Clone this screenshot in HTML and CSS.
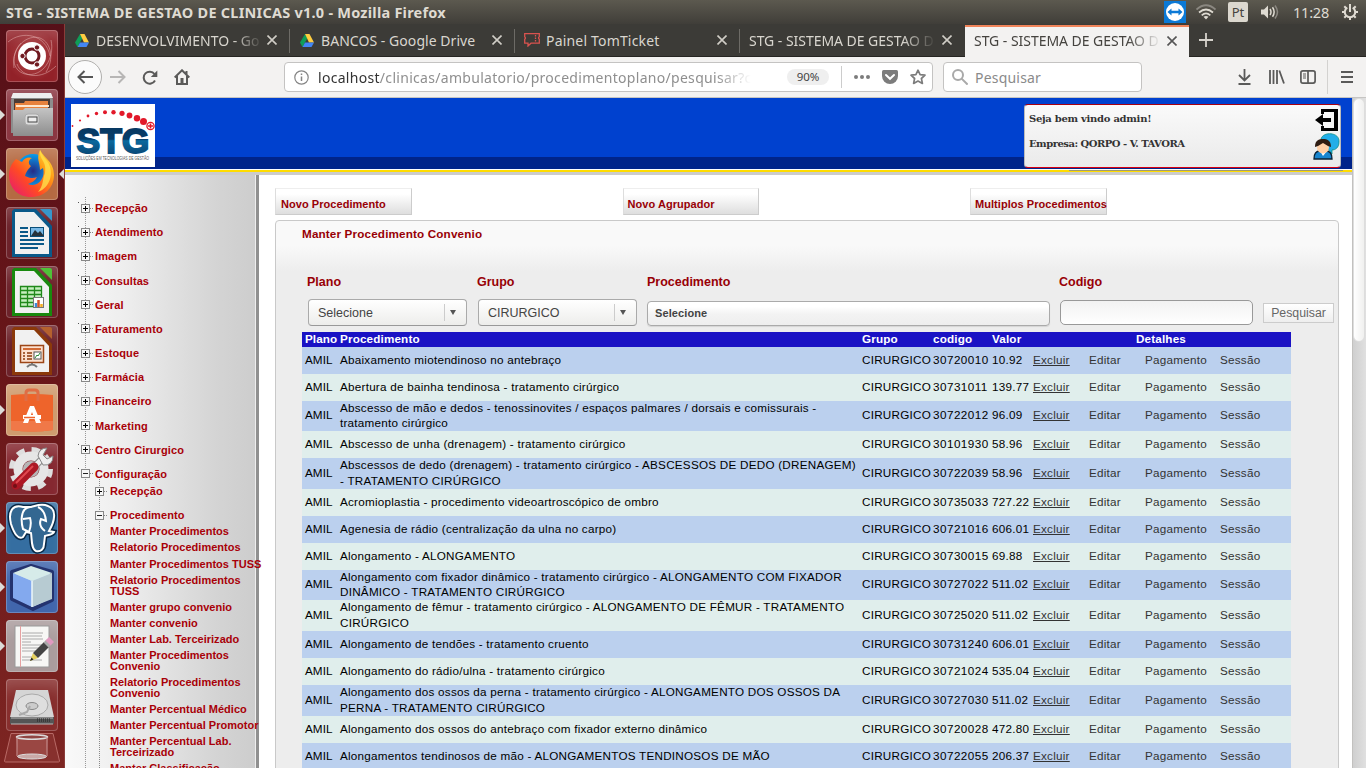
FILE: index.html
```html
<!DOCTYPE html>
<html lang="pt-BR">
<head>
<meta charset="utf-8">
<title>STG - SISTEMA DE GESTAO DE CLINICAS v1.0</title>
<link rel="stylesheet" href="styles.css">
</head>
<body>
<header class="topbar">
  <span class="topbar-title">STG - SISTEMA DE GESTAO DE CLINICAS v1.0 - Mozilla Firefox</span>
  <div class="indicators">
    <svg class="ind-tv" width="22" height="22" viewBox="0 0 22 22"><rect width="22" height="22" fill="#0b79d6"/><circle cx="11" cy="11" r="9" fill="#fff"/><path d="M3.5 11l4-3.6v2.4h7V7.4l4 3.6-4 3.6v-2.4h-7v2.4z" fill="#0b79d6"/></svg>
    <svg class="ind-wifi" width="20" height="16" viewBox="0 0 20 16" fill="none" stroke-width="1.700"><path d="M.5 5.500Q10-3 19.500 5.500" stroke="#8b8881"/><path d="M3 8.500Q10 2.500 17 8.500" stroke="#dfdbd2"/><path d="M5.700 11.400Q10 7.500 14.300 11.400" stroke="#dfdbd2"/><path d="M7.500 12.800q2.500-1.500 5 0L10 15.500z" fill="#dfdbd2"/></svg>
    <span class="ind-lang">Pt</span>
    <svg class="ind-vol" width="20" height="16" viewBox="0 0 20 16" fill="none" stroke="#dfdbd2" stroke-width="1.500"><path d="M0 5.500h3l4-4v13l-4-4H0z" fill="#dfdbd2" stroke="none"/><path d="M9 5q2 3 0 6M11.500 3.300q3.300 4.700 0 9.400"/><path d="M14 1.500q5 6.500 0 13" stroke="#8b8881"/></svg>
    <span class="clock">11:28</span>
    <svg class="ind-gear" width="16" height="16" viewBox="0 0 16 16" fill="none" stroke="#dfdbd2"><path d="M5.300 3.600a5.200 5.200 0 1 0 5.400 0" stroke-width="2"/><path d="M8 0v8" stroke-width="2"/><path d="M0 8h2.500M13.500 8H16M8 13.500V16M2.300 2.300l1.900 1.900M13.700 2.300l-1.900 1.900M2.300 13.700l1.900-1.900M13.700 13.700l-1.900-1.900" stroke-width="2"/></svg>
  </div>
</header>
<div class="desktop">
<nav class="launcher">
  <div class="app app-dash"><svg width="52" height="52" viewBox="0 0 52 52"><g fill="none" stroke="#e7b5b5" opacity=".5"><path d="M8 38C5 16 22 4 34 8c12 5 14 22 6 34M45 10c4 18-8 38-26 34C5 40 5 24 15 13M2 12c14-12 38-8 42 14M50 36C36 50 16 48 11 34"/></g><circle cx="26" cy="26" r="14" fill="#fff"/><circle cx="26" cy="26" r="7" fill="none" stroke="#701920" stroke-width="3"/><g fill="#701920" stroke="#fff" stroke-width="1"><circle cx="16.500" cy="26" r="2.700"/><circle cx="31" cy="17.500" r="2.700"/><circle cx="31" cy="34.500" r="2.700"/></g></svg></div>
  <div class="app app-files running"><svg width="52" height="52" viewBox="0 0 52 52"><defs><linearGradient id="cab" x2="0" y2="1"><stop stop-color="#c4c4c4"/><stop offset="1" stop-color="#8d8d8d"/></linearGradient></defs><path d="M7 4h38l2 7v33H5V11z" fill="#8d8d8d"/><path d="M7 4h38l2 5H5z" fill="#eee"/><rect x="8" y="10" width="36" height="12" fill="#4b3b35"/><path d="M9 14h9l1-2h23v11H9z" fill="#e7823d"/><path d="M10 17h33" stroke="#ffe7ce" stroke-width="2"/><path d="M7 21h10l2-2h28v28H7z" fill="url(#cab)"/><rect x="19" y="25" width="14" height="11" rx="3" fill="#ddd" stroke="#aaa"/><rect x="22" y="28" width="9" height="5" fill="#eee" stroke="#444"/></svg></div>
  <div class="app app-firefox running focused"><svg width="52" height="52" viewBox="0 0 52 52"><defs><linearGradient id="fox" x1="0" y1="1" x2="1" y2="0"><stop stop-color="#e3147b"/><stop offset=".38" stop-color="#ff4a24"/><stop offset=".68" stop-color="#ff9b15"/><stop offset="1" stop-color="#fff34b"/></linearGradient><radialGradient id="globe"><stop stop-color="#252c86"/><stop offset="1" stop-color="#079ded"/></radialGradient></defs><circle cx="27" cy="23" r="17" fill="url(#globe)"/><path d="M10 11l6 3c3-5 7-5 10-4-4 2-4 6-1 8-4 5-5 6-6 10 4 2 8 3 12 1-2 4-6 6-9 7 10 4 18-6 15-16l-3 2c0-8-4-11 0-20 5 9 14 12 14 25 0 13-10 22-23 22S3 40 3 27c0-7 3-12 7-16z" fill="url(#fox)"/><path d="M34 2c-1 11 7 10 5 23-3 7-1 12-7 19 12-4 17-20 9-31-3-4-5-6-7-11z" fill="#ffe04b" opacity=".8"/></svg></div>
  <div class="app app-office"><svg width="52" height="52" viewBox="0 0 52 52"><path d="M8 2h22l16 17v31H6V4z" fill="#0a5989"/><path d="M34 2h10q2 0 2 2v10z" fill="#3797ca"/><path d="M9 5h19l15 16v26H9z" fill="#f1f1f1"/><path d="M14 21h8M14 25h8M14 29h8M14 33h24M14 37h24M14 41h18" stroke="#0a5989" stroke-width="2"/><rect x="24.500" y="20.500" width="13" height="9" fill="#78b8e5" stroke="#0a4e79"/><path d="M25 29l4-6 3 3 2-2 4 5z" fill="#27323a"/></svg></div>
  <div class="app app-office"><svg width="52" height="52" viewBox="0 0 52 52"><path d="M8 2h22l16 17v31H6V4z" fill="#19890e"/><path d="M34 2h10q2 0 2 2v10z" fill="#4fc238"/><path d="M9 5h19l15 16v26H9z" fill="#f1f1f1"/><path d="M14.500 20.500h21v20h-21zM14 24.500h22M14 28.500h22M14 32.500h22M14 36.500h22M21.500 20v21M28.500 20v21" fill="#c6efbf" stroke="#20891a" stroke-width="1.300"/><rect x="27.500" y="31.500" width="10" height="10" fill="#fff" stroke="#777"/><path d="M30 41v-4" stroke="#3e8ad8" stroke-width="2.500"/><path d="M32.500 41v-7" stroke="#d65224" stroke-width="2.500"/><path d="M35.500 41v-3" stroke="#f4ad20" stroke-width="2.500"/></svg></div>
  <div class="app app-office"><svg width="52" height="52" viewBox="0 0 52 52"><path d="M8 2h22l16 17v31H6V4z" fill="#8b390a"/><path d="M34 2h10q2 0 2 2v10z" fill="#b5612e"/><path d="M9 5h19l15 16v26H9z" fill="#f1f1f1"/><rect x="14.500" y="20.500" width="23" height="17" fill="#fce0ce" stroke="#9d4617" stroke-width="1.500"/><path d="M17 24h18" stroke="#d26b35" stroke-width="2"/><path d="M17 28h2M21 28h5M17 31h2M21 31h5M17 34h2M21 34h5" stroke="#8b390a" stroke-width="1.500"/><rect x="28" y="27" width="7" height="7" fill="#fff" stroke="#555"/><path d="M29 33l2-3 1 1 2-3" fill="none" stroke="#2b8c35"/><path d="M26 38v2M21 42q5-5 10 0" fill="none" stroke="#777" stroke-width="2"/></svg></div>
  <div class="app app-software running"><svg width="52" height="52" viewBox="0 0 52 52"><path d="M5 11q21-2 42 0v35q-21 3-42 0z" fill="#ee642b"/><path d="M5 37h42v9q-21 3-42 0z" fill="#f07848"/><path d="M20 17V9q0-3 3-3h6q3 0 3 3v8" fill="none" stroke="#df6d45" stroke-width="3"/><path d="M17 39l7-17h4l7 17h-5l-4-11-4 11z" fill="#fff"/><path d="M17 33h18" stroke="#fff" stroke-width="4"/><path d="M18 33.500h11" stroke="#ee642b" stroke-width="1.500"/></svg></div>
  <div class="app app-settings"><svg width="52" height="52" viewBox="0 0 52 52"><circle cx="25" cy="26" r="19" fill="none" stroke="#dedede" stroke-width="6" stroke-dasharray="8 6.920"/><circle cx="25" cy="26" r="13" fill="none" stroke="#e6e6e6" stroke-width="9"/><circle cx="25" cy="26" r="8" fill="#b6b6b6"/><path d="M29 23L39 13" stroke="#888" stroke-width="7"/><path d="M29 23L39 13" stroke="#eee" stroke-width="5"/><path d="M32 13q1-8 9-8l-4 7 4 4 6-3q0 10-10 9z" fill="#eee" stroke="#888"/><path d="M10 42L28 24" stroke="#ad1724" stroke-width="9" stroke-linecap="round"/><path d="M10 40L27 23" stroke="#e14850" stroke-width="2"/><circle cx="9" cy="43" r="2" fill="#731017"/></svg></div>
  <div class="app app-postgres running"><svg width="52" height="52" viewBox="0 0 52 52"><g stroke="#082745" stroke-width="5"><path d="M17 5C6 2 2 10 5 22c3 9 7 16 12 13l3-5 5 1c1 6 0 16 5 18 5 1 8-2 8-7l1-8c3-1 8-1 9-4l-5-1c6-10 8-22-1-25-7-3-12 0-17 1z"/></g><path d="M17 5C6 2 2 10 5 22c3 9 7 16 12 13l3-5 5 1c1 6 0 16 5 18 5 1 8-2 8-7l1-8c3-1 8-1 9-4l-5-1c6-10 8-22-1-25-7-3-12 0-17 1z" fill="#336791" stroke="#fff" stroke-width="2"/><path d="M24 5c-10 1-9 15-7 22l6 3q3-8 1-14l-7 1M32 5q7 3 8 14l-5-2q-3 7 4 12" fill="none" stroke="#fff" stroke-width="2"/></svg></div>
  <div class="app app-netbeans running"><svg width="52" height="52" viewBox="0 0 52 52"><path d="M25 5L46 11V39L27 48 6 38V11z" fill="#bdd0ee" stroke="#24336f" stroke-width="4" stroke-linejoin="round"/><path d="M7 12l19 8v26L7 37z" fill="#83a9ee"/><path d="M26 20l20-8v26l-20 8z" fill="#b7cbd2"/><path d="M7 12l18-7 21 7-20 8z" fill="#d6ebe9"/><path d="M26 20v26" stroke="#edf7fa" stroke-width="1.500"/></svg></div>
  <div class="app app-editor running"><svg width="52" height="52" viewBox="0 0 52 52"><rect x="9" y="6" width="34" height="41" fill="#f7f7f5" stroke="#999"/><path d="M14.500 6v41" stroke="#e6a1a1"/><path d="M16 13h21M16 16h20M16 19h21M16 22h9M16 25h21M16 28h18M16 31h15M16 37h13M16 40h20" stroke="#aaa"/><path d="M24 41l3-8 5 5z" fill="#e4d05c"/><path d="M24 41l1.500-3.500 2 2z" fill="#222"/><path d="M29.500 35.500l11-11" stroke="#444" stroke-width="7"/><path d="M40 25l3-3" stroke="#aaa" stroke-width="7"/><path d="M42 23l3.500-3.500" stroke="#e199c0" stroke-width="7"/></svg></div>
  <div class="app app-disk"><svg width="52" height="52" viewBox="0 0 52 52"><path d="M10 11h32l6 27H4z" fill="#d5d5d5"/><path d="M4 38h44v7H4z" fill="#555"/><path d="M5 39h42M5 45h42" stroke="#bbb"/><ellipse cx="26" cy="26" rx="16" ry="11" fill="#dedede" stroke="#aaa"/><ellipse cx="26" cy="27" rx="6" ry="3.500" fill="#ccc" stroke="#888"/><path d="M13 36l8-3 3-6" fill="none" stroke="#aaa" stroke-width="2"/><path d="M31 42h13M31 40h13" stroke="#222" stroke-dasharray="1 1"/></svg></div>
  <svg class="trash" width="56" height="30" viewBox="0 0 56 30"><path d="M7 .500h42L55.500 28q0 1-1 1h-53q-1 0-1-1z" fill="#87302d" stroke="#b86a66"/><path d="M12 4l2 20q14 4 28 0l2-20z" fill="#a3514d" opacity=".7"/><ellipse cx="28" cy="4" rx="15.500" ry="2.200" fill="#8f4643" stroke="#ddd" stroke-width="1.500"/><path d="M13 4v19M43 4v19" stroke="#c99"/><ellipse cx="28" cy="23.500" rx="14.500" ry="2.500" fill="#c9a9a7" stroke="#ddd"/></svg>
</nav>
<div class="browser">
  <div class="tabs">
    <div class="tab">
      <svg width="14" height="13" viewBox="0 0 14 13"><path d="M5 0L0 8.500 2.500 13 7.500 4z" fill="#0f9d58"/><path d="M5 0h4.500L14 8.500H9z" fill="#ffcd40"/><path d="M2.500 13L5 8.500h9L11.500 13z" fill="#4285f4"/></svg>
      <span class="tab-label faded">DESENVOLVIMENTO - Go</span>
      <svg class="close" width="10" height="10" viewBox="0 0 10 10"><path d="M.5.5l9 9m0-9l-9 9"/></svg>
    </div>
    <div class="tab">
      <svg width="14" height="13" viewBox="0 0 14 13"><path d="M5 0L0 8.500 2.500 13 7.500 4z" fill="#0f9d58"/><path d="M5 0h4.500L14 8.500H9z" fill="#ffcd40"/><path d="M2.500 13L5 8.500h9L11.500 13z" fill="#4285f4"/></svg>
      <span class="tab-label drive">BANCOS - Google Drive</span>
      <svg class="close" width="10" height="10" viewBox="0 0 10 10"><path d="M.5.5l9 9m0-9l-9 9"/></svg>
    </div>
    <div class="tab tab-ticket">
      <svg width="16" height="14" viewBox="0 0 16 14" fill="none" stroke="#d9534f" stroke-width="1.300"><path d="M.7.7h14.600v3q-1.500 1 0 2.500v4H7L4 13v-2.800H.7v-4q1.500-1 0-2.500z"/><path d="M11.500 2v7" stroke-dasharray="1.500 1"/></svg>
      <span class="tab-label">Painel TomTicket</span>
      <svg class="close" width="10" height="10" viewBox="0 0 10 10"><path d="M.5.5l9 9m0-9l-9 9"/></svg>
    </div>
    <div class="tab last">
      <span class="tab-label faded">STG - SISTEMA DE GESTAO D</span>
      <svg class="close" width="10" height="10" viewBox="0 0 10 10"><path d="M.5.5l9 9m0-9l-9 9"/></svg>
    </div>
    <div class="tab active">
      <span class="tab-label faded">STG - SISTEMA DE GESTAO D</span>
      <svg class="close" width="10" height="10" viewBox="0 0 10 10"><path d="M.5.5l9 9m0-9l-9 9"/></svg>
    </div>
    <svg class="newtab" width="14" height="14" viewBox="0 0 14 14"><path d="M7 0v14M0 7h14" stroke="#d6d3cc" stroke-width="1.800"/></svg>
  </div>
  <div class="toolbar">
    <span class="back"><svg width="16" height="14" viewBox="0 0 16 14" fill="none" stroke="#555" stroke-width="2"><path d="M16 7H1.500M7.500 1L1.500 7l6 6"/></svg></span>
    <svg class="fwd" width="16" height="14" viewBox="0 0 16 14" fill="none" stroke="#b7b6b5" stroke-width="2"><path d="M0 7h14.500M8.500 1l6 6-6 6"/></svg>
    <svg class="reload" width="16" height="15" viewBox="0 0 16 15" fill="none" stroke="#5a5a59" stroke-width="2"><path d="M12.500 4A6 6 0 1 0 13 10.500"/><path d="M15.300.5v6.500H8.800z" fill="#5a5a59" stroke="none"/></svg>
    <svg class="home" width="16" height="16" viewBox="0 0 16 16" fill="none" stroke="#5a5a59" stroke-width="2"><path d="M.7 8.500L8 1.300l7.300 7.200M3 7v8h10V7M12.500 2v3"/><rect x="6.500" y="9" width="3" height="6" fill="#5a5a59" stroke="none"/></svg>
    <div class="urlbar">
      <svg class="info" width="15" height="15" viewBox="0 0 15 15" fill="none" stroke="#858585"><circle cx="7.500" cy="7.500" r="6.700" stroke-width="1.200"/><path d="M7.500 6.500V11M7.500 3.500V5" stroke-width="1.500"/></svg>
      <span class="url"><b>localhost</b>/clinicas/ambulatorio/procedimentoplano/pesquisar?c</span>
      <span class="zoom">90%</span>
      <span class="rule"></span>
      <svg class="dots" width="16" height="4" viewBox="0 0 16 4" fill="#7c7c7c"><circle cx="2" cy="2" r="2"/><circle cx="8" cy="2" r="2"/><circle cx="14" cy="2" r="2"/></svg>
      <svg class="pocket" width="16" height="14" viewBox="0 0 16 14"><path d="M1.500 0h13Q16 0 16 1.500V6a8 8 0 0 1-16 0V1.500Q0 0 1.500 0z" fill="#7c7c7c"/><path d="M4 5l4 3.800L12 5" fill="none" stroke="#fff" stroke-width="2" stroke-linecap="round"/></svg>
      <svg class="star" width="16" height="16" viewBox="0 0 16 16" fill="none" stroke="#7c7c7c" stroke-width="1.700" stroke-linejoin="round"><path d="M8 1.200l2.100 4.400 4.900.6-3.600 3.300 1 4.900L8 12l-4.400 2.400 1-4.900L1 6.200l4.900-.6z"/></svg>
    </div>
    <div class="search"><svg width="16" height="16" viewBox="0 0 16 16" fill="none" stroke="#a9a9a9" stroke-width="2"><circle cx="6" cy="6" r="5"/><path d="M9.600 9.600l6 6"/></svg><span>Pesquisar</span></div>
    <div class="tools">
      <svg width="13" height="16" viewBox="0 0 13 16" fill="none" stroke="#5a5a59" stroke-width="1.800"><path d="M6.500 0v11M1 6l5.500 5.500L12 6M.5 15h12"/></svg>
      <svg class="lib" width="16" height="14" viewBox="0 0 16 14" fill="none" stroke="#5a5a59" stroke-width="1.800"><path d="M1 0v14M4.500 0v14M8 0v14M10.300.500L15 13.500"/></svg>
      <svg class="side" width="16" height="14" viewBox="0 0 16 14" fill="none" stroke="#5a5a59" stroke-width="1.700"><rect x=".9" y=".9" width="14.200" height="12.200" rx="2"/><path d="M8 1v12"/><path d="M3 4h3M3 6h3M3 8h3" stroke-width="1"/></svg>
      <span class="tool-rule"></span>
      <svg class="menu" width="12" height="12" viewBox="0 0 12 12" stroke="#5a5a59" stroke-width="2"><path d="M0 1h12M0 6h12M0 11h12"/></svg>
    </div>
  </div>
  <div class="viewport">
    <div class="page">
      <div class="banner">
        <svg class="logo" width="84" height="63" viewBox="0 0 84 63"><defs><linearGradient id="stg" x2="0" y2="1"><stop stop-color="#08365e"/><stop offset=".48" stop-color="#073d69"/><stop offset=".52" stop-color="#0a699e"/><stop offset="1" stop-color="#083b68"/></linearGradient></defs><rect width="84" height="63" fill="#fff"/><g fill="#e2192a"><circle cx="1.500" cy="22" r=".9"/><circle cx="9" cy="16.500" r="1.100"/><circle cx="17" cy="12" r="1.400"/><circle cx="25.500" cy="9.500" r="1.700"/><circle cx="34" cy="8.300" r="2"/><circle cx="42.500" cy="8.200" r="2.200"/><circle cx="51" cy="9.300" r="2.600"/><circle cx="58.500" cy="11.500" r="2.900"/><circle cx="66" cy="14.300" r="3.200"/><circle cx="72.500" cy="17.500" r="3.500"/></g><circle cx="79.500" cy="22" r="3.600" fill="#fff" stroke="#e2192a" stroke-width="1.300"/><path d="M79.500 19.500v5M77 22h5" stroke="#e2192a" stroke-width="1.600"/><text class="logo-name" x="5.500" y="48.500" textLength="73" lengthAdjust="spacingAndGlyphs" fill="url(#stg)" stroke="url(#stg)" stroke-width="1.800">STG</text><text class="logo-sub" x="5" y="56" textLength="73" lengthAdjust="spacingAndGlyphs">SOLUÇÕES EM TECNOLOGIAS DE GESTÃO</text></svg>
        <div class="welcome">
          <div class="welcome-text"><p>Seja bem vindo admin!</p><p class="company">Empresa: QORPO - V. TAVORA</p></div>
          <div class="welcome-icons">
            <svg width="24" height="22" viewBox="0 0 24 22"><path d="M6 0h17v22H6v-5h3v2h10V3H9v2H6z"/><path d="M0 11l8-6v4h8v4H8v4z"/></svg>
            <svg class="user" width="27" height="27" viewBox="0 0 27 27"><path d="M8 6C10-2 27-1 26 9c0 6-4 8-7 8v4l-4-5z" fill="#22aee8" stroke="#087" stroke-width=".7"/><path d="M1 26c0-7 3-8 6-8h6c4 0 6 3 6 8z" fill="#1785cf" stroke="#0a2235" stroke-width="1.300"/><path d="M7 18l3 5 4-5z" fill="#fff"/><circle cx="10" cy="14.500" r="6" fill="#ffd0a7"/><path d="M2 14C2 7 6 6 10 6s8 1 8 8l-3-1-5-3-5 3z" fill="#2f1c12"/></svg>
          </div>
        </div>
        <div class="thinline"></div>
      </div>
      <div class="columns">
        <aside class="sidebar">
          <ul class="tree">
            <li><i class="node plus"></i>Recepção</li>
            <li><i class="node plus"></i>Atendimento</li>
            <li><i class="node plus"></i>Imagem</li>
            <li><i class="node plus"></i>Consultas</li>
            <li><i class="node plus"></i>Geral</li>
            <li><i class="node plus"></i>Faturamento</li>
            <li><i class="node plus"></i>Estoque</li>
            <li><i class="node plus"></i>Farmácia</li>
            <li><i class="node plus"></i>Financeiro</li>
            <li><i class="node plus"></i>Marketing</li>
            <li><i class="node plus"></i>Centro Cirurgico</li>
            <li><i class="node"></i>Configuração</li>
          </ul>
          <div class="subtree">
            <ul class="branches"><li><i class="node plus"></i>Recepção</li><li><i class="node"></i>Procedimento</li></ul>
            <ul class="leaves">
              <li>Manter Procedimentos</li>
              <li>Relatorio Procedimentos</li>
              <li>Manter Procedimentos TUSS</li>
              <li>Relatorio Procedimentos<br>TUSS</li>
              <li>Manter grupo convenio</li>
              <li>Manter convenio</li>
              <li>Manter Lab. Terceirizado</li>
              <li>Manter Procedimentos<br>Convenio</li>
              <li>Relatorio Procedimentos<br>Convenio</li>
              <li>Manter Percentual Médico</li>
              <li>Manter Percentual Promotor</li>
              <li>Manter Percentual Lab.<br>Terceirizado</li>
              <li>Manter Classificação</li>
            </ul>
          </div>
        </aside>
        <main class="content">
          <div class="actions"><a class="action">Novo Procedimento</a><a class="action">Novo Agrupador</a><a class="action">Multiplos Procedimentos</a></div>
          <section class="panel">
            <h3>Manter Procedimento Convenio</h3>
            <div class="filters">
              <div class="field f-plano"><label>Plano</label><div class="select"><span>Selecione</span><i></i></div></div>
              <div class="field f-grupo"><label>Grupo</label><div class="select"><span>CIRURGICO</span><i></i></div></div>
              <div class="field f-proc"><label>Procedimento</label><div class="chosen">Selecione</div></div>
              <div class="field f-cod"><label>Codigo</label><div class="textbox"></div></div>
              <span class="submit">Pesquisar</span>
            </div>
            <div class="table">
              <div class="row head"><b>Plano</b><b>Procedimento</b><b>Grupo</b><b>codigo</b><b>Valor</b><b class="details">Detalhes</b></div>
              <div class="row"><span>AMIL</span><span>Abaixamento miotendinoso no antebraço</span><span>CIRURGICO</span><span class="num">30720010</span><span>10.92</span><a class="u">Excluir</a><a>Editar</a><a>Pagamento</a><a>Sessão</a></div>
              <div class="row"><span>AMIL</span><span>Abertura de bainha tendinosa - tratamento cirúrgico</span><span>CIRURGICO</span><span class="num">30731011</span><span>139.77</span><a class="u">Excluir</a><a>Editar</a><a>Pagamento</a><a>Sessão</a></div>
              <div class="row two"><span>AMIL</span><span>Abscesso de mão e dedos - tenossinovites / espaços palmares / dorsais e comissurais -<br>tratamento cirúrgico</span><span>CIRURGICO</span><span class="num">30722012</span><span>96.09</span><a class="u">Excluir</a><a>Editar</a><a>Pagamento</a><a>Sessão</a></div>
              <div class="row"><span>AMIL</span><span>Abscesso de unha (drenagem) - tratamento cirúrgico</span><span>CIRURGICO</span><span class="num">30101930</span><span>58.96</span><a class="u">Excluir</a><a>Editar</a><a>Pagamento</a><a>Sessão</a></div>
              <div class="row two tall"><span>AMIL</span><span>Abscessos de dedo (drenagem) - tratamento cirúrgico - ABSCESSOS DE DEDO (DRENAGEM)<br>- TRATAMENTO CIRÚRGICO</span><span>CIRURGICO</span><span class="num">30722039</span><span>58.96</span><a class="u">Excluir</a><a>Editar</a><a>Pagamento</a><a>Sessão</a></div>
              <div class="row"><span>AMIL</span><span>Acromioplastia - procedimento videoartroscópico de ombro</span><span>CIRURGICO</span><span class="num">30735033</span><span>727.22</span><a class="u">Excluir</a><a>Editar</a><a>Pagamento</a><a>Sessão</a></div>
              <div class="row"><span>AMIL</span><span>Agenesia de rádio (centralização da ulna no carpo)</span><span>CIRURGICO</span><span class="num">30721016</span><span>606.01</span><a class="u">Excluir</a><a>Editar</a><a>Pagamento</a><a>Sessão</a></div>
              <div class="row"><span>AMIL</span><span>Alongamento - ALONGAMENTO</span><span>CIRURGICO</span><span class="num">30730015</span><span>69.88</span><a class="u">Excluir</a><a>Editar</a><a>Pagamento</a><a>Sessão</a></div>
              <div class="row two"><span>AMIL</span><span>Alongamento com fixador dinâmico - tratamento cirúrgico - ALONGAMENTO COM FIXADOR<br>DINÂMICO - TRATAMENTO CIRÚRGICO</span><span>CIRURGICO</span><span class="num">30727022</span><span>511.02</span><a class="u">Excluir</a><a>Editar</a><a>Pagamento</a><a>Sessão</a></div>
              <div class="row two tall"><span>AMIL</span><span>Alongamento de fêmur - tratamento cirúrgico - ALONGAMENTO DE FÊMUR - TRATAMENTO<br>CIRÚRGICO</span><span>CIRURGICO</span><span class="num">30725020</span><span>511.02</span><a class="u">Excluir</a><a>Editar</a><a>Pagamento</a><a>Sessão</a></div>
              <div class="row"><span>AMIL</span><span>Alongamento de tendões - tratamento cruento</span><span>CIRURGICO</span><span class="num">30731240</span><span>606.01</span><a class="u">Excluir</a><a>Editar</a><a>Pagamento</a><a>Sessão</a></div>
              <div class="row"><span>AMIL</span><span>Alongamento do rádio/ulna - tratamento cirúrgico</span><span>CIRURGICO</span><span class="num">30721024</span><span>535.04</span><a class="u">Excluir</a><a>Editar</a><a>Pagamento</a><a>Sessão</a></div>
              <div class="row two tall"><span>AMIL</span><span>Alongamento dos ossos da perna - tratamento cirúrgico - ALONGAMENTO DOS OSSOS DA<br>PERNA - TRATAMENTO CIRÚRGICO</span><span>CIRURGICO</span><span class="num">30727030</span><span>511.02</span><a class="u">Excluir</a><a>Editar</a><a>Pagamento</a><a>Sessão</a></div>
              <div class="row"><span>AMIL</span><span>Alongamento dos ossos do antebraço com fixador externo dinâmico</span><span>CIRURGICO</span><span class="num">30720028</span><span>472.80</span><a class="u">Excluir</a><a>Editar</a><a>Pagamento</a><a>Sessão</a></div>
              <div class="row"><span>AMIL</span><span>Alongamentos tendinosos de mão - ALONGAMENTOS TENDINOSOS DE MÃO</span><span>CIRURGICO</span><span class="num">30722055</span><span>206.37</span><a class="u">Excluir</a><a>Editar</a><a>Pagamento</a><a>Sessão</a></div>
            </div>
          </section>
        </main>
      </div>
    </div>
    <div class="scrollbar"><div class="thumb"></div></div>
  </div>
</div>
</div>
</body>
</html>
```
FILE: styles.css
```css
* { box-sizing: border-box; }
html, body { margin: 0; height: 768px; overflow: hidden; }
body { width: 1366px; font-family: "Liberation Sans", Arial, sans-serif; }
svg { display: block; flex: none; }
ul { list-style: none; margin: 0; padding: 0; }

/* Desktop top bar */
.topbar { height: 24px; display: flex; align-items: center; justify-content: space-between; background: linear-gradient(#5c594f, #403e39); color: #dfdbd2; font: 15px "Noto Sans", sans-serif; white-space: nowrap; }
.topbar-title { margin: -1px 0 0 6px; font-weight: bold; font-size: 14.500px; letter-spacing: .24px; }
.indicators { display: flex; align-items: center; padding-right: 8px; }
.ind-wifi { margin-left: 10px; }
.ind-lang { margin-left: 12px; width: 20px; height: 20px; border-radius: 2px; background: #dcd8cf; color: #45433e; font-size: 13px; line-height: 20px; text-align: center; }
.ind-vol { margin-left: 13px; }
.clock { margin: -1px 0 0 12px; width: 37px; font-size: 14.500px; letter-spacing: -.2px; }
.ind-gear { margin-left: 12px; }

.desktop { display: flex; height: 744px; }

/* Launcher */
.launcher { width: 65px; flex: none; display: flex; flex-direction: column; gap: 7px; padding: 6px 0 0 6px; background: linear-gradient(#561018, #681619 45%, #7d2522); border-right: 1px solid #8a3c39; overflow: hidden; }
.app { position: relative; width: 52px; height: 52px; flex: none; border-radius: 4px; box-shadow: inset 0 0 0 1px rgba(255,255,255,.22), inset 0 16px 16px -8px rgba(255,255,255,.2); }
.app-dash { background: radial-gradient(#b44a4c, #922128 70%); }
.app-files { background: #8a3540; }
.app-firefox { background: #b56a42; }
.app-office { background: #6b2028; }
.app-software { background: #cf9b6e; }
.app-settings { background: #852830; }
.app-postgres { background: #356ea1; }
.app-netbeans { background: #4166ac; }
.app-editor { background: #aa9c9d; }
.app-disk { background: #862c2b; }
.running::before { content: ""; position: absolute; left: -6px; top: 21px; border: 5px solid transparent; border-left-color: #dcdcd8; border-right: 0; }
.focused::after { content: ""; position: absolute; right: -6px; top: 21px; border: 5px solid transparent; border-right-color: #dcdcd8; border-left: 0; }
.trash { margin: -5px 0 0 -2px; }

.browser { flex: 1; min-width: 0; display: flex; flex-direction: column; }

/* Tabs */
.tabs { height: 33px; display: flex; background: #3c3b37; border-bottom: 1px solid #262522; font: 14px "Noto Sans", sans-serif; color: #d9d6cf; }
.tab { position: relative; width: 225px; display: flex; align-items: center; padding: 0 13px 0 10px; }
.tab-ticket { padding-left: 9px; letter-spacing: .18px; }
.tab-ticket .tab-label { margin-left: 6px; }
.drive { letter-spacing: .05px; }
.tab:not(.last):not(.active)::after { content: ""; position: absolute; right: 0; top: 5px; height: 24px; width: 1px; background: #6d6b66; }
.tab-label { width: 167px; margin-left: 7px; white-space: nowrap; overflow: hidden; }
.tab > .tab-label:first-child { width: 187px; margin-left: -1px; letter-spacing: -.04px; }
.tab-label.faded { mask-image: linear-gradient(to right, #000 82%, transparent 100%); -webkit-mask-image: linear-gradient(to right, #000 82%, transparent 100%); }
.close { margin-left: auto; fill: none; stroke: #d0cdc6; stroke-width: 1.6; }
.tab.active { width: 224px; height: 32px; margin: 1px 0 -1px; padding: 0 12px 4px 10px; background: #f3f2f1; border-top: 2px solid #f0845a; color: #45433f; height: 33px; }
.active .close { stroke: #555; }
.newtab { margin: 9px 0 0 10px; }

/* Toolbar */
.toolbar { height: 41px; display: flex; align-items: center; background: #f3f2f1; border-bottom: 1px solid #c6c5c3; padding-left: 3px; font: 14px "Noto Sans", sans-serif; }
.back { width: 34px; height: 34px; border: 1px solid #b0afad; border-radius: 50%; background: #fbfbfb; display: grid; place-items: center; }
.fwd { margin-left: 8px; }
.reload { margin-left: 16px; }
.home { margin-left: 16px; }
.urlbar { margin-left: 94px; width: 649px; height: 30px; display: flex; align-items: center; border: 1px solid #c4c3c2; border-radius: 4px; background: #fff; padding-left: 9px; }
.url { margin-left: 9px; width: 433px; overflow: hidden; white-space: nowrap; color: #8f8f8f; letter-spacing: .3px; mask-image: linear-gradient(to right, #000 92%, transparent 100%); -webkit-mask-image: linear-gradient(to right, #000 92%, transparent 100%); }
.url b { font-weight: normal; color: #333; }
.zoom { margin-left: 36px; width: 42px; height: 16px; border-radius: 8px; background: #efefef; color: #444; font-size: 11.5px; line-height: 16px; text-align: center; }
.rule { margin-left: 12px; width: 1px; height: 22px; background: #ccc; }
.dots { margin-left: 12px; }
.pocket { margin-left: 12px; }
.star { margin-left: 12px; }
.search { margin-left: 10px; width: 199px; height: 30px; display: flex; align-items: center; gap: 7px; padding-left: 8px; border: 1px solid #c4c3c2; border-radius: 4px; background: #fff; color: #8a8a8a; letter-spacing: .2px; }
.tools { display: flex; align-items: center; margin-left: 96px; }
.lib { margin-left: 18px; }
.side { margin-left: 15px; }
.tool-rule { width: 1px; height: 34px; background: #d3d2d0; margin-left: 11px; }
.menu { margin-left: 13px; }

/* Web page */
.viewport { flex: 1; min-height: 0; display: flex; background: #fff; }
.page { width: 1287px; overflow: hidden; }
.banner { position: relative; height: 77px; display: flex; justify-content: space-between; padding: 6px 11px 0 6px; background: linear-gradient(#0041cf 0 59.500px, #00248a 59.500px 71px, #fff 71px 72px, #ffdc00 72px 74px, #ccc 74px); }
.logo-name { font: bold 35px "Liberation Sans", sans-serif; }
.logo-sub { font: 5.500px "Liberation Sans", sans-serif; fill: #555; }
.welcome { width: 317px; height: 64px; display: flex; justify-content: space-between; border: 1px solid #bbb; border-top-color: #a80010; border-bottom-color: #d80012; border-radius: 4px; background: linear-gradient(#fafafa, #eaeaea); padding: 4px 1px 0 4px; font: bold 10px/14px "DejaVu Serif", serif; color: #333; letter-spacing: -.28px; }
.welcome p { margin: 3px 0 11px; white-space: nowrap; }
.company { letter-spacing: -.5px; }
.welcome-icons { margin-right: -1px; }
.user { margin: 2px 0 0 -2px; }
.thinline { position: absolute; right: 9px; top: 72px; width: 274px; height: 1px; background: #a09b70; }
.columns { display: flex; height: 593px; }

.sidebar { width: 194px; flex: none; padding: 21px 0 0 16px; background: linear-gradient(to right, #f9f9f9, #eee 30%, #d4d4d4 78%, #cdcdcd 98%, #eee 98%, #eee 98.500%, #909090 98.500%); color: #a80008; font-weight: bold; font-size: 11px; letter-spacing: .1px; white-space: nowrap; }
.tree { background: linear-gradient(to bottom, #999 50%, transparent 50%) 4px 5px / 1px 2px repeat-y; }
.tree li, .branches li { position: relative; display: flex; align-items: center; height: 24.180px; }
.tree li::before { content: ""; position: absolute; left: -3px; top: 6px; width: 1px; height: 1px; background: #555; }
.node { position: relative; width: 9px; height: 9px; border: 1px solid #888; background: linear-gradient(#222, #222) center / 5px 1px no-repeat #f7f7f7; margin-right: 5px; }
.node::after { content: ""; position: absolute; left: 8px; top: 3px; width: 3px; border-top: 1px dotted #888; }
.plus { background: linear-gradient(#000, #000) center / 5px 1px no-repeat, linear-gradient(#000, #000) center / 1px 5px no-repeat #f7f7f7; }
.subtree { height: 300px; padding-left: 14px; background: linear-gradient(to bottom, #999 50%, transparent 50%) 4px 0 / 1px 2px repeat-y, linear-gradient(to bottom, #888 50%, transparent 50%) 18px 0 / 1px 2px repeat-y; margin-top: -7px; }
.branches .node { margin-right: 6px; }
.leaves { margin-top: -3.900px; padding-left: 15px; line-height: 10.800px; letter-spacing: .02px; }
.leaves li { padding: 2.700px 0; }

.content { width: 1093px; padding: 13px 13px 0 16px; }
.actions { display: flex; height: 27px; gap: 211px; }
.action { width: 136.500px; height: 27px; flex: none; padding: 8px 0 0 5px; line-height: 14px; white-space: nowrap; border: 1px solid #ccc; border-top-color: #eee; border-left-color: #ddd; background: linear-gradient(#fff 20%, #dedede); color: #980006; font-weight: bold; font-size: 11px; letter-spacing: .05px; }
.action + .action { padding-left: 4px; }
.panel { margin-top: 5px; height: 560px; border: 1px solid #c9c9c9; border-radius: 4px; padding: 6px 4px 0 26px; background: linear-gradient(#f9f9f9 25px, #ededed 50px); }
.panel h3 { margin: 0; font-size: 11.700px; line-height: 14px; color: #980006; letter-spacing: .15px; }
.filters { display: flex; height: 91px; padding-top: 33px; }
.field label { display: block; height: 16px; line-height: 16px; font-weight: bold; font-size: 12.500px; color: #980006; }
.f-plano { width: 170px; padding-left: 5px; }
.f-grupo { width: 170px; padding-left: 5px; }
.f-proc { width: 412px; padding-left: 5px; }
.f-cod { width: 209px; padding-left: 5px; }
.select { width: 159px; height: 27px; margin: 9px 0 0 1px; display: flex; align-items: center; justify-content: space-between; padding-left: 9px; border: 1px solid #aaa; border-bottom-color: #999; border-radius: 4px; background: linear-gradient(#fff, #ededeb); font-size: 12.500px; color: #444; }
.select i { width: 22px; height: 17px; border-left: 1px solid #ccc; display: grid; place-items: center; padding-right: 6px; }
.select i::after { content: ""; border: 3px solid transparent; border-top: 5px solid #555; border-bottom: 0; }
.chosen { width: 403px; height: 25px; margin-top: 11px; padding-left: 7px; border: 1px solid #aaa; border-radius: 4px; background: linear-gradient(#fff 20%, #f3f3f3 52%, #eee); font-weight: bold; font-size: 11px; letter-spacing: .1px; line-height: 23px; color: #444; box-shadow: 0 1px 1px rgba(0,0,0,.1); }
.textbox { width: 193px; height: 25px; margin: 10px 0 0 1px; border: 1px solid #999; border-radius: 5px; background: linear-gradient(#f2f2f2, #fff); }
.submit { width: 71px; height: 20px; margin-top: 29px; flex: none; border: 1px solid #ccc; background: linear-gradient(#fff, #eee); color: #666; font-size: 12.300px; line-height: 18px; text-align: center; }
.table { width: 989px; font-size: 11.700px; letter-spacing: .24px; color: #000; }
.row { display: grid; grid-template-columns: 35px 522px 71px 59px 41px 56px 56px 75px 1fr; align-items: center; height: 27px; padding: 0 0 1.500px 3px; line-height: 15.500px; background: #bbd0ee; white-space: nowrap; }
.row > :first-child { letter-spacing: .05px; }
.row > .num { letter-spacing: .46px; }
.row:nth-child(odd) { background: #e0eeec; }
.row.two { height: 30px; align-content: center; padding-bottom: 2px; }
.row.two.tall { height: 31px; }
.row.head { height: 15px; line-height: 13px; padding-bottom: 2px; background: #1a12c4; color: #fff; letter-spacing: .15px; }
.details { grid-column: 6 / 10; text-align: center; padding-right: 2px; }
.row a { color: #333; }
.row .u { text-decoration: underline; }

.scrollbar { width: 14px; border-left: 1px solid #c2c1bf; background: linear-gradient(to right, #cfcfcf, #e0e0e0); }
.thumb { height: 244px; width: 12px; border-radius: 6px; border: 1px solid #ddd; background: linear-gradient(to right, #fff, #f0f0ef); }
```
